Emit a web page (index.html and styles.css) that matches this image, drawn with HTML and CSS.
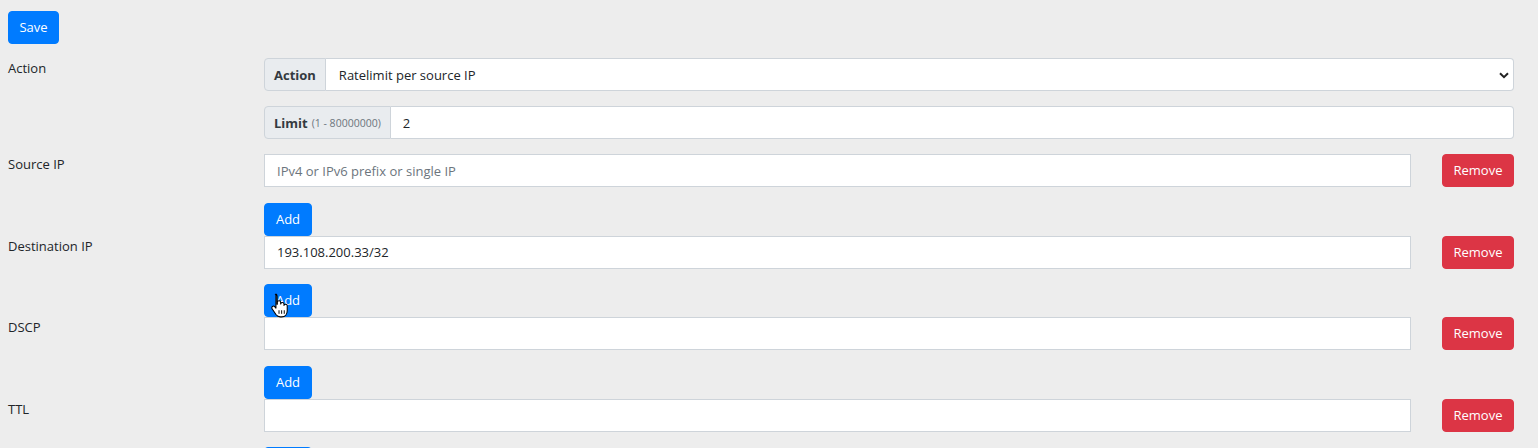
FILE: index.html
```html
<!DOCTYPE html>
<html>
<head>
<meta charset="utf-8">
<link rel="stylesheet" href="styles.css">
</head>
<body>
<div class="page">
  <div class="toolbar"><button class="btn btn-primary btn-save">Save</button></div>

  <div class="form-row">
    <div class="label">Action</div>
    <div class="control">
      <div class="input-group">
        <span class="group-text"><b>Action</b></span>
        <div class="select-wrap">
          <select class="select"><option>Ratelimit per source IP</option></select>
          <svg class="chevron" width="10" height="7" viewBox="0 0 10 7"><path d="M1 1.2 L5 5.2 L9 1.2" fill="none" stroke="#222" stroke-width="2"/></svg>
        </div>
      </div>
    </div>
  </div>

  <div class="form-row">
    <div class="label"></div>
    <div class="control">
      <div class="input-group">
        <span class="group-text"><b>Limit</b> <small>(1 - 80000000)</small></span>
        <input class="input grouped" value="2">
      </div>
    </div>
  </div>

  <div class="form-row">
    <div class="label">Source IP</div>
    <div class="control">
      <div class="field"><input class="input" placeholder="IPv4 or IPv6 prefix or single IP"><button class="btn btn-danger">Remove</button></div>
      <div class="add"><button class="btn btn-primary btn-add">Add</button></div>
    </div>
  </div>

  <div class="form-row tight">
    <div class="label">Destination IP</div>
    <div class="control">
      <div class="field"><input class="input" value="193.108.200.33/32"><button class="btn btn-danger">Remove</button></div>
      <div class="add cursor-host"><button class="btn btn-primary btn-add">Add</button>
        <svg class="cursor" width="19" height="27" viewBox="0 0 16 22"><path d="M4.5 1.5c.9 0 1.5.6 1.5 1.5v7l.2-.1V8.4c0-.8.6-1.4 1.4-1.4s1.4.6 1.4 1.4v1.4c.1-.8.7-1.300 1.4-1.3.8 0 1.4.6 1.4 1.4v1c.2-.6.7-1 1.3-1 .8 0 1.4.6 1.4 1.4v4.2c0 2.8-1.8 5.1-4.6 5.1H8.6c-1.6 0-2.7-.8-3.6-2L1.9 14c-.6-.8-.5-1.7.2-2.2.7-.5 1.5-.3 2 .3l.9 1.1V3c0-.9-.4-1.5.5-1.5z" fill="#fff" stroke="#000" stroke-width=".9" stroke-linejoin="round"/><path d="M7.6 15v3M9.8 15v3M12 15v3" stroke="#000" stroke-width=".8"/></svg>
      </div>
    </div>
  </div>

  <div class="form-row tight">
    <div class="label">DSCP</div>
    <div class="control">
      <div class="field"><input class="input" value=""><button class="btn btn-danger">Remove</button></div>
      <div class="add"><button class="btn btn-primary btn-add">Add</button></div>
    </div>
  </div>

  <div class="form-row tight">
    <div class="label">TTL</div>
    <div class="control">
      <div class="field"><input class="input" value=""><button class="btn btn-danger">Remove</button></div>
      <div class="add"><button class="btn btn-primary btn-add">Add</button></div>
    </div>
  </div>
</div>
</body>
</html>
```

FILE: styles.css
```css
html, body {
  margin: 0;
  padding: 0;
  background: #ededed;
}
body {
  font-family: "Open Sans", "Noto Sans", "Liberation Sans", sans-serif;
  font-size: 13px;
  color: #212529;
  overflow: hidden;
}
.page {
  padding: 11px 24px 0 8px;
}
.btn {
  font-family: inherit;
  font-size: 13px;
  height: 33px;
  line-height: 31px;
  padding: 0;
  border: 1px solid transparent;
  border-radius: 4px;
  color: #fff;
  cursor: pointer;
  box-sizing: border-box;
  text-align: center;
}
.btn-primary { background: #007bff; border-color: #007bff; }
.btn-danger { background: #dc3545; border-color: #dc3545; width: 72px; }
.btn-save { width: 51px; }
.btn-add { width: 48px; }

.form-row {
  display: grid;
  grid-template-columns: 256px 1fr;
  margin-top: 15px;
}
.toolbar + .form-row { margin-top: 14px; }
.form-row.tight { margin-top: 0; }
.label {
  line-height: 21px;
}
.control { display: flex; flex-direction: column; }

.input-group {
  display: flex;
  height: 33px;
}
.group-text {
  display: flex;
  align-items: center;
  padding: 0 9px;
  background: #e9ecef;
  border: 1px solid #ced4da;
  border-radius: 4px 0 0 4px;
  color: #343a40;
  white-space: nowrap;
}
.group-text b { font-weight: 700; }
.group-text small { font-size: 10.5px; color: #6c757d; margin-left: 4px; }
.select-wrap {
  position: relative;
  flex: 1;
  display: flex;
}
.select {
  flex: 1;
  appearance: none;
  -webkit-appearance: none;
  background: #fff;
  border: 1px solid #ced4da;
  border-left: none;
  border-radius: 0 4px 4px 0;
  font-family: inherit;
  font-size: 13px;
  color: #212529;
  padding: 0 12px 0 13px;
  height: 33px;
  outline: none;
}
.chevron {
  position: absolute;
  right: 5px;
  top: 14px;
}
.input {
  flex: 1;
  min-width: 0;
  height: 33px;
  box-sizing: border-box;
  border: 1px solid #ced4da;
  border-radius: 0;
  background: #fff;
  font-family: inherit;
  font-size: 13px;
  color: #212529;
  padding: 0 12px;
  outline: none;
}
.input::placeholder { color: #6c757d; }
.input.grouped {
  border-left: none;
  border-radius: 0 4px 4px 0;
}
.field {
  display: flex;
  gap: 31px;
}
.add {
  margin-top: 15.5px;
  display: flex;
}
.cursor-host { position: relative; }
.cursor {
  position: absolute;
  left: 6px;
  top: 8px;
}
```
